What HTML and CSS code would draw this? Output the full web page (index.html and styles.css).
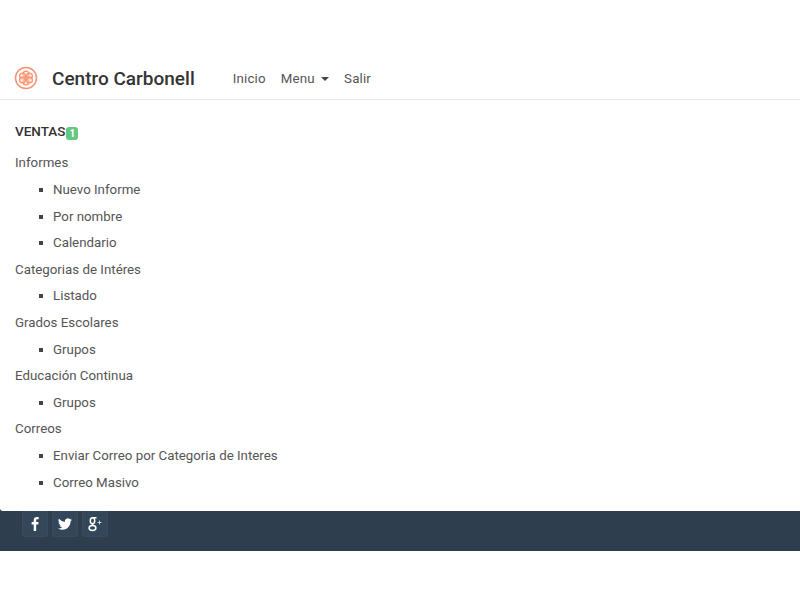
FILE: index.html
```html
<!DOCTYPE html>
<html lang="es">
<head>
<meta charset="utf-8">
<title>Centro Carbonell</title>
<link rel="stylesheet" href="styles.css">
</head>
<body>
<div class="page">
  <header class="navbar">
    <a class="brand" href="#">
      <svg class="logo" width="24" height="24" viewBox="0 0 24 24" fill="none" stroke="#f8926f">
        <circle cx="12" cy="12" r="10.5" stroke-width="1.5"/>
        <g stroke-width="1.2" fill="#fbd3c4" fill-opacity="0.5">
          <circle cx="12" cy="8" r="2.9"/>
          <circle cx="12" cy="16" r="2.9"/>
          <circle cx="8.5" cy="10" r="2.9"/>
          <circle cx="15.500" cy="10" r="2.9"/>
          <circle cx="8.5" cy="14" r="2.9"/>
          <circle cx="15.500" cy="14" r="2.9"/>
        </g>
      </svg>
      <span class="brand-name">Centro Carbonell</span>
    </a>
    <nav class="nav">
      <a href="#">Inicio</a>
      <a href="#">Menu <span class="caret"></span></a>
      <a href="#">Salir</a>
    </nav>
  </header>
  <main class="card">
    <h2 class="title">VENTAS<span class="badge">1</span></h2>
    <ul class="menu">
      <li>Informes
        <ul>
          <li>Nuevo Informe</li>
          <li>Por nombre</li>
          <li>Calendario</li>
        </ul>
      </li>
      <li>Categorias de Intéres
        <ul><li>Listado</li></ul>
      </li>
      <li>Grados Escolares
        <ul><li>Grupos</li></ul>
      </li>
      <li>Educación Continua
        <ul><li>Grupos</li></ul>
      </li>
      <li>Correos
        <ul>
          <li>Enviar Correo por Categoria de Interes</li>
          <li>Correo Masivo</li>
        </ul>
      </li>
    </ul>
  </main>
  <footer class="footer">
    <a class="social" href="#" aria-label="Facebook">
      <svg width="14" height="14" viewBox="0 0 24 24" fill="#fff"><path d="M14 24V13h3.600l.6-4.300H14V6c0-1.200.4-2.100 2.100-2.100h2.200V.2C17.900.1 16.600 0 15.200 0 12 0 9.800 2 9.800 5.500v3.200H6.200V13h3.600v11z"/></svg>
    </a>
    <a class="social" href="#" aria-label="Twitter">
      <svg width="14" height="14" viewBox="0 0 24 24" fill="#fff"><path d="M24 4.600c-.9.400-1.800.7-2.800.8 1-.6 1.800-1.600 2.200-2.700-1 .6-2 1-3.100 1.200A4.900 4.900 0 0 0 11.900 8.400 14 14 0 0 1 1.700 3.200a4.900 4.900 0 0 0 1.500 6.600c-.8 0-1.600-.2-2.200-.6 0 2.400 1.700 4.400 3.900 4.900-.7.200-1.500.2-2.200.1.600 2 2.400 3.400 4.600 3.400A9.900 9.900 0 0 1 0 19.600 14 14 0 0 0 7.500 21.800c9.100 0 14.300-7.700 14-14.600 1-.7 1.800-1.600 2.500-2.600z"/></svg>
    </a>
    <a class="social" href="#" aria-label="Google Plus">
      <svg width="16" height="16" viewBox="0 0 16 16" fill="none" stroke="#fff">
        <ellipse cx="5.500" cy="4.800" rx="2.200" ry="3" stroke-width="1.500"/>
        <ellipse cx="5.500" cy="12" rx="3.400" ry="2.400" stroke-width="1.500"/>
        <path d="M5.500 7.500v2.500M5.500 1.800h4" stroke-width="1.400"/>
        <path d="M10.500 6.500h4M12.500 4.500v4" stroke-width="1" opacity="0.7"/>
      </svg>
    </a>
  </footer>
</div>
</body>
</html>
```
FILE: styles.css
```css
* { box-sizing: border-box; }
html, body { margin: 0; padding: 0; background: #fff; }
body { font-family: Roboto, "Liberation Sans", sans-serif; font-size: 13.3px; color: #555; }
a { color: inherit; text-decoration: none; }
.page { padding-top: 59px; }

.navbar {
  display: flex;
  align-items: center;
  height: 41px;
  padding: 0 0 2px 14px;
  border-bottom: 1px solid #e7e7e7;
}
.brand { display: flex; align-items: center; gap: 14px; }
.logo { display: block; }
.brand-name { font-size: 19px; font-weight: 500; color: #333; }
.nav { display: flex; gap: 15px; margin-left: 38px; color: #555; font-size: 13.3px; letter-spacing: 0.16px; }
.caret {
  display: inline-block;
  margin-left: 3px;
  vertical-align: middle;
  border-top: 4px solid #444;
  border-left: 4px solid transparent;
  border-right: 4px solid transparent;
}

.card {
  position: relative;
  z-index: 1;
  height: 411px;
  padding: 18px 15px 0;
  background: #fff;
  border-radius: 0 0 0 3px;
}
.title { margin: 0; font-size: 13.5px; line-height: 26px; font-weight: 500; color: #333; }
.badge {
  display: inline-block;
  width: 12px;
  height: 13px;
  margin-left: 1px;
  border-radius: 3px;
  background: #66c784;
  color: #fff;
  font-size: 10px;
  font-weight: 700;
  line-height: 13px;
  text-align: center;
  vertical-align: -1px;
}
.menu, .menu ul { margin: 0; padding: 0; list-style: none; }
.menu { margin-top: 6.4px; line-height: 26.6px; }
.menu ul { padding-left: 38px; }
.menu ul li::before {
  content: "";
  display: inline-block;
  width: 4px;
  height: 4px;
  margin-left: -14px;
  margin-right: 10px;
  vertical-align: 2px;
  background: #444;
}

.footer {
  display: flex;
  gap: 4px;
  height: 44px;
  margin-top: -4px;
  padding: 4px 0 0 22px;
  background: #2f3e4e;
}
.social {
  display: flex;
  align-items: center;
  justify-content: center;
  width: 26px;
  height: 26px;
  background: #34465a;
  border: 1px solid #3a4b5e;
  border-top: 0;
  border-radius: 0 0 3px 3px;
  color: #fff;
}
```
